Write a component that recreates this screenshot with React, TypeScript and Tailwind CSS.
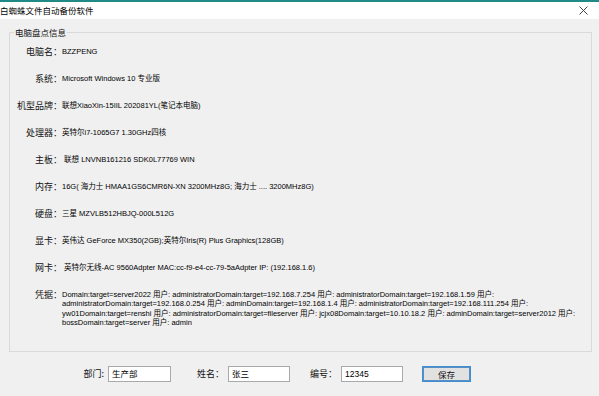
const cjk = '"Noto Sans CJK SC", "Noto Sans", sans-serif'
const mixed = '"Liberation Sans", "Noto Sans CJK SC", sans-serif'

const ROWS: [string, string][] = [
  ['电脑名：', 'BZZPENG'],
  ['系统：', 'Microsoft Windows 10 专业版'],
  ['机型品牌：', '联想XiaoXin-15IIL 202081YL(笔记本电脑)'],
  ['处理器：', '英特尔i7-1065G7 1.30GHz四核'],
  ['主板：', ' 联想 LNVNB161216 SDK0L77769 WIN'],
  ['内存：', '16G( 海力士 HMAA1GS6CMR6N-XN 3200MHz8G; 海力士 .... 3200MHz8G)'],
  ['硬盘：', '三星 MZVLB512HBJQ-000L512G'],
  ['显卡：', '英伟达 GeForce MX350(2GB);英特尔Iris(R) Plus Graphics(128GB)'],
  ['网卡：', ' 英特尔无线-AC 9560Adpter MAC:cc-f9-e4-cc-79-5aAdpter IP: (192.168.1.6)'],
]

const CRED_LINES = [
  'Domain:target=server2022 用户: administratorDomain:target=192.168.7.254 用户: administratorDomain:target=192.168.1.59 用户:',
  'administratorDomain:target=192.168.0.254 用户: adminDomain:target=192.168.1.4 用户: administratorDomain:target=192.168.111.254 用户:',
  'yw01Domain:target=renshi 用户: administratorDomain:target=fileserver 用户: jcjx08Domain:target=10.10.18.2 用户: adminDomain:target=server2012 用户:',
  'bossDomain:target=server 用户: admin',
]

function Field({ label, value, labelW, inputW }: { label: string; value: string; labelW: string; inputW: string }) {
  return (
    <div className="flex items-center">
      <span className={`${labelW} text-right text-[9px] text-[#111] pr-[4px]`} style={{ fontFamily: cjk }}>
        {label}
      </span>
      <div
        className={`${inputW} h-[16px] bg-white border border-[#a9a9a9] flex items-center pl-[3px] text-[8.5px] text-black`}
        style={{ fontFamily: mixed }}
      >
        {value}
      </div>
    </div>
  )
}

export default function App() {
  return (
    <div className="w-[599px] h-[396px] bg-[#f0f0f0] overflow-hidden flex flex-col">
      <div className="h-[2px] bg-[#1f8a86]" />
      <div className="h-[17px] bg-white flex items-center justify-between">
        <span className="text-[8.5px] text-black leading-none" style={{ fontFamily: cjk }}>
          白蜘蛛文件自动备份软件
        </span>
        <svg width="9" height="9" viewBox="0 0 9 9" className="mr-[11px]">
          <path d="M0.5 0.5 L8.5 8.5 M8.5 0.5 L0.5 8.5" stroke="#444" strokeWidth="1" />
        </svg>
      </div>

      <div className="relative mt-[13px] ml-[9px] w-[583px] h-[320px] border border-[#dadada] pt-[5px]">
        <span
          className="absolute -top-[7px] left-[4px] px-[1px] bg-[#f0f0f0] text-[8.5px] leading-[12px] text-[#111]"
          style={{ fontFamily: cjk }}
        >
          电脑盘点信息
        </span>

        {ROWS.map(([label, value]) => (
          <div key={label} className="flex items-center h-[27px]">
            <span className="w-[52px] text-right text-[9px] text-[#111] shrink-0" style={{ fontFamily: cjk }}>
              {label}
            </span>
            <span className="text-[7.5px] text-black whitespace-pre" style={{ fontFamily: mixed }}>
              {value}
            </span>
          </div>
        ))}

        <div className="flex items-start mt-[9px]">
          <span className="w-[52px] text-right text-[9px] leading-[10px] text-[#111] shrink-0" style={{ fontFamily: cjk }}>
            凭据：
          </span>
          <div className="flex flex-col text-[7.5px] leading-[9.3px] text-black whitespace-nowrap" style={{ fontFamily: mixed }}>
            {CRED_LINES.map((line) => (
              <span key={line}>{line}</span>
            ))}
          </div>
        </div>
      </div>

      <div className="flex items-center mt-[14px] pl-[75px]">
        <Field label="部门:" value="生产部" labelW="w-[33px]" inputW="w-[63px]" />
        <div className="ml-[26px]">
          <Field label="姓名：" value="张三" labelW="w-[31px]" inputW="w-[62px]" />
        </div>
        <div className="ml-[20px]">
          <Field label="编号：" value="12345" labelW="w-[31px]" inputW="w-[62px]" />
        </div>
        <button
          className="ml-[19px] w-[49px] h-[16px] bg-[#e1e1e1] border border-[#3f8ed3] shadow-[inset_0_0_0_1px_#5a8fc0] text-[8.5px] text-[#111] flex items-center justify-center"
          style={{ fontFamily: cjk }}
        >
          保存
        </button>
      </div>
    </div>
  )
}
